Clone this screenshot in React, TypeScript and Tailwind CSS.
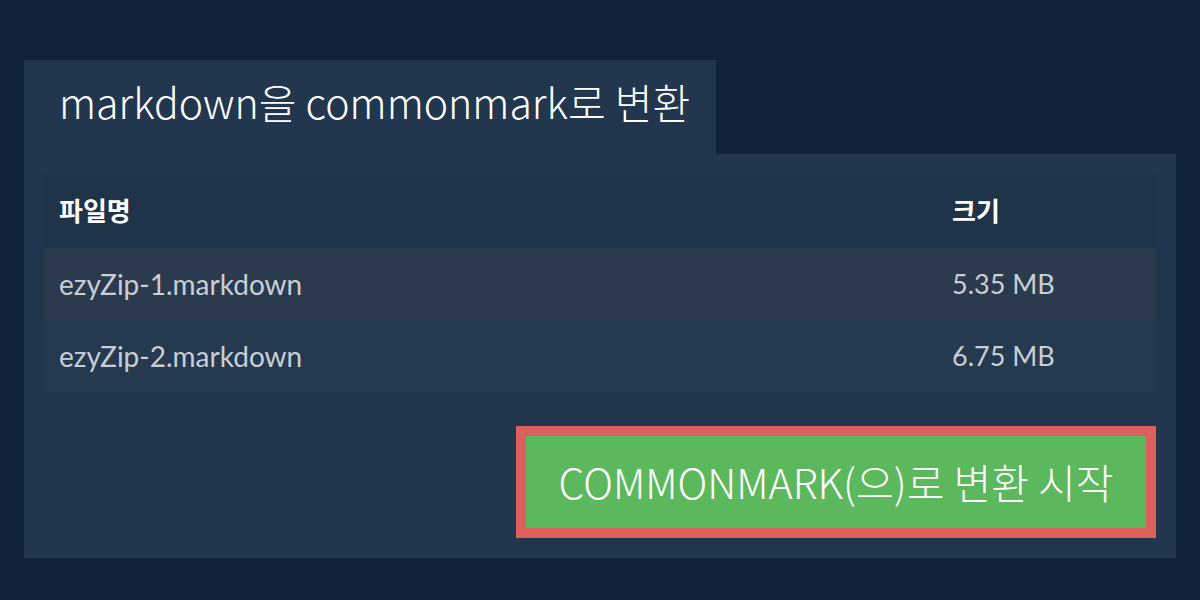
const files = [
  { name: "ezyZip-1.markdown", size: "5.35 MB" },
  { name: "ezyZip-2.markdown", size: "6.75 MB" },
];

export default function App() {
  return (
    <div className="h-[600px] w-[1200px] bg-[#10233a] px-6 pt-[60px] font-['Lato','Noto_Sans_CJK_KR',sans-serif]">
      <div className="flex">
        <div className="flex h-[94px] w-[692px] items-start bg-[#22364e] pl-[35px] pt-[14px]">
          <h1 className="font-['Noto_Sans_CJK_KR',sans-serif] text-[41px] font-light leading-[54px] text-white">
            markdown을 commonmark로 변환
          </h1>
        </div>
      </div>
      <div className="h-[404px] bg-[#22364e] px-5 pt-5">
        <table className="w-full border-collapse text-left">
          <thead>
            <tr className="h-[74px] bg-[#1f3349]">
              <th className="pb-1 pl-[15px] font-['Noto_Sans_CJK_KR',sans-serif] text-[26px] font-bold text-white">파일명</th>
              <th className="w-[204px] pb-1 font-['Noto_Sans_CJK_KR',sans-serif] text-[26px] font-bold text-white">크기</th>
            </tr>
          </thead>
          <tbody>
            {files.map((f, i) => (
              <tr key={f.name} className={i === 0 ? "h-[72px] bg-[#2b3b4d]" : "h-[72px] bg-[#25394f]"}>
                <td className="pl-[15px] text-[28px] text-[#c9ced6]">{f.name}</td>
                <td className="text-[27px] text-[#c9ced6]">{f.size}</td>
              </tr>
            ))}
          </tbody>
        </table>
        <div className="mt-[34px] flex justify-end">
          <button className="h-[112px] w-[640px] border-[10px] border-[#dc605c] bg-[#5cb85c] font-['Noto_Sans_CJK_KR',sans-serif] text-[41px] font-light text-white">
            COMMONMARK(으)로 변환 시작
          </button>
        </div>
      </div>
    </div>
  );
}
